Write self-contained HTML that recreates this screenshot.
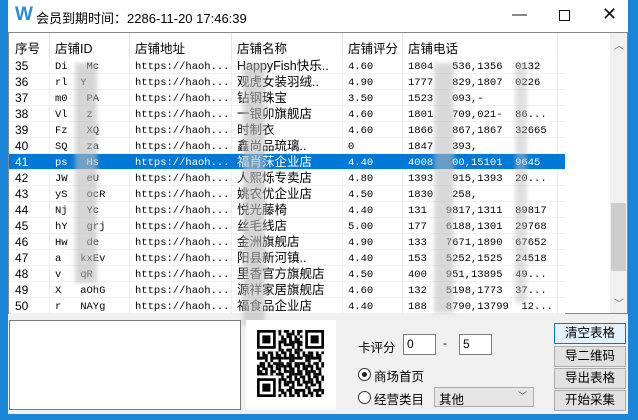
<!DOCTYPE html>
<html><head><meta charset="utf-8"><style>
*{margin:0;padding:0;box-sizing:border-box}
body{width:638px;height:420px;background:#1a86d8;position:relative;overflow:hidden;font-family:"Liberation Sans","Noto Sans CJK SC",sans-serif;font-size:12px;color:#000}
.win{position:absolute;left:8px;top:0;width:620px;height:414px;background:#f0f0f0}
.title{position:absolute;left:0;top:0;width:620px;height:32px;background:#fff}
.title .t{position:absolute;left:28px;top:8px;font-size:13px}
.title .w{position:absolute;left:7px;top:4px;font-size:19px;font-weight:bold;color:#2a8be0;font-family:"Liberation Sans",sans-serif}
.ctl{position:absolute;top:6px;font-size:15px;color:#111}
.lv{position:absolute;left:0;top:32px;width:620px;height:282px;background:#fff;border:1px solid #828790}
.hdr{position:absolute;left:0;top:0;height:25px;width:610px;background:#fff}
.hdr span{position:absolute;top:5px;font-size:12.5px}
.vd{position:absolute;top:0;height:25px;width:1px;background:#e5e5e5}
.row{position:absolute;left:0;height:16px;width:556px;border-bottom:1px solid #f0f0f0}
.row span{position:absolute;top:1px;white-space:nowrap;line-height:14px}
.m{font-family:"Liberation Mono",monospace;font-size:10.5px}
.sel{background:#0078d7;color:#fff}
.gl{position:absolute;top:25px;height:256px;width:1px;background:#f0f0f0}
.sb{position:absolute;left:601px;top:0;width:17px;height:280px;background:#f0f0f0}
.thumb{position:absolute;left:602px;top:170px;width:15px;height:68px;background:#cdcdcd}
.blur{position:absolute;background:#bbb;filter:blur(2px);opacity:.85}
.btn{position:absolute;left:546px;width:72px;height:21px;background:#e1e1e1;border:1px solid #adadad;text-align:center;font-size:12.5px;line-height:19px}
.inp{position:absolute;background:#fff;border:1px solid #7a7a7a;height:21px;font-size:12px;padding:2px 3px}
.radio{position:absolute;width:13px;height:13px;border:1px solid #333;border-radius:50%;background:#fff}
</style></head><body>
<div class="win">
 <div class="title"><span class="w">W</span><span class="t">会员到期时间：2286-11-20 17:46:39</span>
  <span class="ctl" style="left:186px;top:4px;font-size:16px;left:186px"></span>
  <span class="ctl" style="left:504px">—</span>
  <span style="position:absolute;left:551px;top:10px;width:11px;height:11px;border:1px solid #111"></span>
  <span class="ctl" style="left:594px;top:4px;font-size:18px">✕</span>
 </div>
 <div class="lv">
  <div class="hdr">
   <span style="left:6px">序号</span><span style="left:46px">店铺ID</span><span style="left:126px">店铺地址</span><span style="left:228px">店铺名称</span><span style="left:339px">店铺评分</span><span style="left:399px">店铺电话</span>
   <div class="vd" style="left:40px"></div><div class="vd" style="left:120px"></div><div class="vd" style="left:222px"></div><div class="vd" style="left:333px"></div><div class="vd" style="left:393px"></div><div class="vd" style="left:548px"></div>
  </div>
  <div class="gl" style="left:40px"></div><div class="gl" style="left:120px"></div><div class="gl" style="left:222px"></div><div class="gl" style="left:333px"></div><div class="gl" style="left:393px"></div><div class="gl" style="left:548px"></div>
  <div id="rows"></div>
  <div class="sb"><span style="position:absolute;left:4px;top:4px;font-size:10px;color:#606060">︿</span><span style="position:absolute;left:4px;top:262px;font-size:10px;color:#606060">﹀</span></div>
  <div class="thumb"></div>
  <div class="blur" style="left:66px;top:30px;width:22px;height:220px;opacity:.6"></div>
  <div class="blur" style="left:234px;top:30px;width:22px;height:262px;opacity:.6"></div>
  <div class="blur" style="left:425px;top:30px;width:20px;height:250px;opacity:.55"></div>
  <div class="blur" style="left:506px;top:30px;width:12px;height:240px;opacity:.45"></div>
 </div>
 <div style="position:absolute;left:1px;top:320px;width:232px;height:90px;background:#fff;border:1px solid #7a7a7a"></div>
 <div style="position:absolute;left:238px;top:320px;width:90px;height:90px;background:#fff"></div>
 <svg style="position:absolute;left:249px;top:330px" width="67" height="67" viewBox="0 0 25 25">
  <defs><pattern id="p" width="5" height="5" patternUnits="userSpaceOnUse"><path d="M0 0h2v1H0zM3 0h1v2H3zM1 2h2v1H1zM4 2h1v2H4zM0 3h1v2H0zM2 4h2v1H2zM2 3h1v1H2z" fill="#000"/></pattern>
  <pattern id="q" width="7" height="6" patternUnits="userSpaceOnUse"><path d="M1 0h1v2H1zM4 1h2v1H4zM0 4h3v1H0zM5 3h1v3H5z" fill="#000"/></pattern></defs>
  <rect width="25" height="25" fill="url(#p)"/><rect width="25" height="25" fill="url(#q)"/>
  <g fill="#fff"><rect width="8" height="8"/><rect x="17" width="8" height="8"/><rect y="17" width="8" height="8"/></g>
  <g fill="none" stroke="#000"><rect x=".5" y=".5" width="6" height="6"/><rect x="18.5" y=".5" width="6" height="6"/><rect x=".5" y="18.5" width="6" height="6"/></g>
  <g fill="#000"><rect x="2" y="2" width="3" height="3"/><rect x="20" y="2" width="3" height="3"/><rect x="2" y="20" width="3" height="3"/></g>
 </svg>
 <span style="position:absolute;left:350px;top:337px;font-size:12.5px">卡评分</span>
 <div class="inp" style="left:395px;top:334px;width:33px">0</div>
 <span style="position:absolute;left:435px;top:336px">-</span>
 <div class="inp" style="left:451px;top:334px;width:33px">5</div>
 <div class="radio" style="left:350px;top:368px"><div style="position:absolute;left:3px;top:3px;width:5px;height:5px;border-radius:50%;background:#222"></div></div>
 <span style="position:absolute;left:366px;top:366px;font-size:12.5px">商场首页</span>
 <div class="radio" style="left:350px;top:391px"></div>
 <span style="position:absolute;left:366px;top:389px;font-size:12.5px">经营类目</span>
 <div style="position:absolute;left:426px;top:387px;width:100px;height:20px;background:#e5e5e5;border:1px solid #acacac;font-size:12.5px;padding:1px 4px">其他<span style="position:absolute;right:6px;top:1px;font-size:9px;color:#444">﹀</span></div>
 <div class="btn" style="top:323px;background:#e5f1fb;border:1px solid #0078d7">清空表格</div>
 <div class="btn" style="top:346px">导二维码</div>
 <div class="btn" style="top:368px">导出表格</div>
 <div class="btn" style="top:390px">开始采集</div>
</div>
<script>
var d=[["35","Di   Mc","HappyFish快乐..","4.60","1804   536,1356  0132"],["36","rl  Y","观虎女装羽绒..","4.90","1777   829,1807  0226"],["37","m0   PA","钻钢珠宝","3.50","1523   093,-"],["38","Vl   z","一银卯旗舰店","4.60","1801   709,021-  86..."],["39","Fz   XQ","时制衣","4.60","1866   867,1867  32665"],["40","SQ   za","鑫尚品琉璃..","0","1847   393,"],["41","ps   Hs","福肖莯企业店","4.40","4008   00,15101  9645"],["42","JW   eU","人熙烁专卖店","4.80","1393   915,1393  20..."],["43","yS   ocR","姚农优企业店","4.50","1830   258,"],["44","Nj   Yc","悦光藤椅","4.40","131   9817,1311  89817"],["45","hY   grj","丝毛线店","5.00","177   6188,1301  29768"],["46","Hw   de","金洲旗舰店","4.90","133   7671,1890  67652"],["47","a   kxEv","阳县新河镇..","4.40","153   5252,1525  24518"],["48","v   qR","里香官方旗舰店","4.50","400   951,13895  49..."],["49","X   aOhG","源祥家居旗舰店","4.60","132   5198,1773  37..."],["50","r   NAYg","福食品企业店","4.40","188   8790,13799  12..."]];
var h="";d.forEach(function(r,i){h+='<div class="row'+(r[0]=="41"?" sel":"")+'" style="top:'+(25+i*16)+'px"><span style="left:6px">'+r[0]+'</span><span class="m" style="left:46px;top:2px">'+r[1].replace(/ /g,"&nbsp;")+'</span><span class="m" style="left:126px;top:2px">https://haoh...</span><span style="left:228px;font-size:12.5px">'+r[2]+'</span><span class="m" style="left:339px;top:2px">'+r[3]+'</span><span class="m" style="left:399px;top:2px">'+r[4].replace(/ /g,"&nbsp;")+'</span></div>'});
document.getElementById("rows").innerHTML=h;
</script>
</body></html>
